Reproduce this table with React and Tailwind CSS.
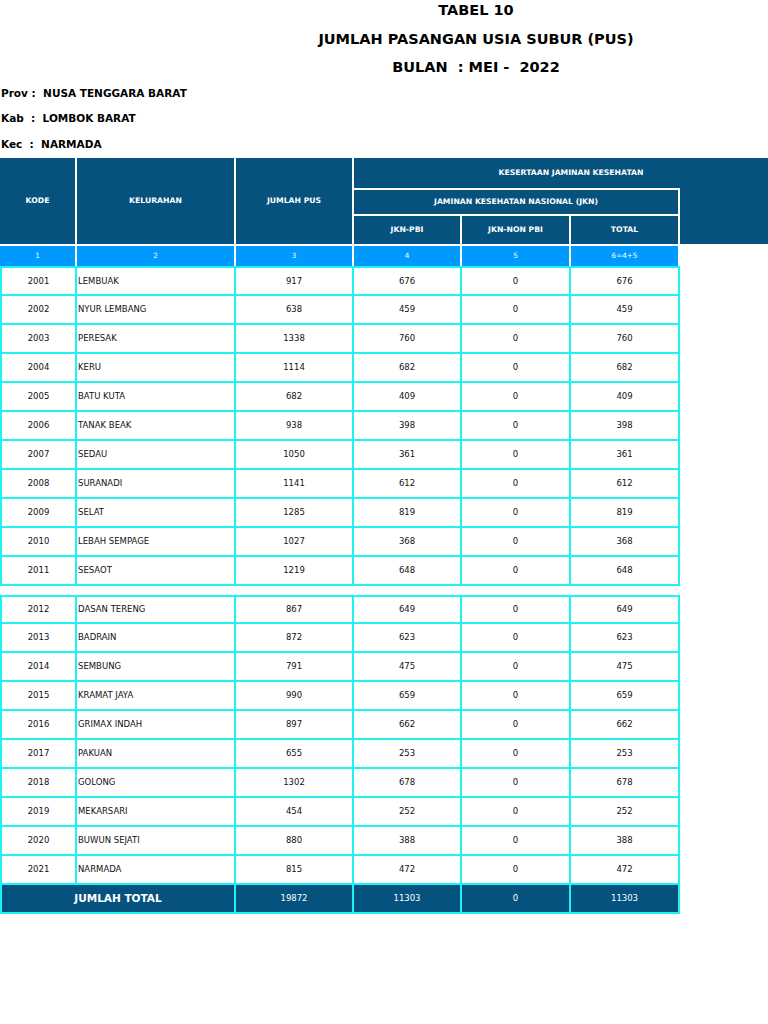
import React from 'react'

const groupA = [
  ['2001', 'LEMBUAK', '917', '676', '0', '676'],
  ['2002', 'NYUR LEMBANG', '638', '459', '0', '459'],
  ['2003', 'PERESAK', '1338', '760', '0', '760'],
  ['2004', 'KERU', '1114', '682', '0', '682'],
  ['2005', 'BATU KUTA', '682', '409', '0', '409'],
  ['2006', 'TANAK BEAK', '938', '398', '0', '398'],
  ['2007', 'SEDAU', '1050', '361', '0', '361'],
  ['2008', 'SURANADI', '1141', '612', '0', '612'],
  ['2009', 'SELAT', '1285', '819', '0', '819'],
  ['2010', 'LEBAH SEMPAGE', '1027', '368', '0', '368'],
  ['2011', 'SESAOT', '1219', '648', '0', '648'],
]

const groupB = [
  ['2012', 'DASAN TERENG', '867', '649', '0', '649'],
  ['2013', 'BADRAIN', '872', '623', '0', '623'],
  ['2014', 'SEMBUNG', '791', '475', '0', '475'],
  ['2015', 'KRAMAT JAYA', '990', '659', '0', '659'],
  ['2016', 'GRIMAX INDAH', '897', '662', '0', '662'],
  ['2017', 'PAKUAN', '655', '253', '0', '253'],
  ['2018', 'GOLONG', '1302', '678', '0', '678'],
  ['2019', 'MEKARSARI', '454', '252', '0', '252'],
  ['2020', 'BUWUN SEJATI', '880', '388', '0', '388'],
  ['2021', 'NARMADA', '815', '472', '0', '472'],
]

const cols = 'grid grid-cols-[77px_159px_118px_108px_109px_109px] w-[680px]'

function Row({ r, first, tall }) {
  return (
    <div
      className={
        cols +
        ' border-b-2 border-[#1ef2f2] ' +
        (tall ? 'h-[30px] ' : 'h-[29px] ') +
        (first ? 'border-t-2' : '')
      }
    >
      {r.map((v, i) => (
        <div
          key={i}
          className={
            'flex items-center border-r-2 border-[#1ef2f2] ' +
            (i === 0 ? 'border-l-2 justify-center ' : '') +
            (i === 1 ? 'pl-[1px]' : 'justify-center')
          }
        >
          {v}
        </div>
      ))}
    </div>
  )
}

export default function App() {
  return (
    <div className="w-[768px] h-[1024px] bg-white text-black font-['DejaVu_Sans',sans-serif] overflow-hidden">
      <div className="pl-[184px] text-center font-bold text-[14.5px]">
        <div className="h-[20px] mt-[1px] flex items-center justify-center">TABEL 10</div>
        <div className="h-[20px] mt-[9px] flex items-center justify-center">JUMLAH PASANGAN USIA SUBUR (PUS)</div>
        <div className="h-[20px] mt-[8px] flex items-center justify-center whitespace-pre">BULAN  : MEI -  2022</div>
      </div>
      <div className="font-bold text-[10.5px] whitespace-pre pl-[1px]">
        <div className="h-[20px] mt-[6px] flex items-center">Prov :  NUSA TENGGARA BARAT</div>
        <div className="h-[20px] mt-[5px] flex items-center">Kab  :  LOMBOK BARAT</div>
        <div className="h-[20px] mt-[6px] flex items-center">Kec  :  NARMADA</div>
      </div>

      <div className="mt-[3px]">
        {/* header */}
        <div className="flex w-[768px] h-[88px] bg-[#05527e] text-white font-bold text-[7.7px] border-b-2 border-white">
          <div className="w-[77px] border-r-2 border-white flex items-center justify-center">KODE</div>
          <div className="w-[159px] border-r-2 border-white flex items-center justify-center">KELURAHAN</div>
          <div className="w-[118px] border-r-2 border-white flex items-center justify-center">JUMLAH PUS</div>
          <div className="flex-1 flex flex-col">
            <div className="h-[30px] flex items-center justify-center pl-[20px]">KESERTAAN JAMINAN KESEHATAN</div>
            <div className="flex flex-1">
              <div className="w-[326px] flex flex-col border-t-2 border-r-2 border-white">
                <div className="h-[26px] border-b-2 border-white flex items-center justify-center">
                  JAMINAN KESEHATAN NASIONAL (JKN)
                </div>
                <div className="flex flex-1">
                  <div className="w-[108px] border-r-2 border-white flex items-center justify-center">JKN-PBI</div>
                  <div className="w-[109px] border-r-2 border-white flex items-center justify-center">JKN-NON PBI</div>
                  <div className="flex-1 flex items-center justify-center">TOTAL</div>
                </div>
              </div>
              <div className="flex-1" />
            </div>
          </div>
        </div>

        {/* column numbers */}
        <div className={cols + ' h-[20px] bg-[#0099ff] text-white text-[7.2px]'}>
          {['1', '2', '3', '4', '5', '6=4+5'].map((v, i) => (
            <div key={i} className="flex items-center justify-center border-r-2 border-white">
              {v}
            </div>
          ))}
        </div>

        <div className="text-[8.5px] text-[#111]">
          {groupA.map((r, i) => (
            <Row key={r[0]} r={r} first={i === 0} tall={i === 0} />
          ))}
          <div className="h-[9px]" />
          {groupB.map((r, i) => (
            <Row key={r[0]} r={r} first={i === 0} />
          ))}

          {/* total */}
          <div className={cols + ' h-[29px] bg-[#05527e] text-white border-b-2 border-[#1ef2f2]'}>
            <div className="col-span-2 flex items-center justify-center font-bold text-[10.5px] border-l-2 border-r-2 border-[#1ef2f2]">
              JUMLAH TOTAL
            </div>
            {['19872', '11303', '0', '11303'].map((v, i) => (
              <div key={i} className="flex items-center justify-center border-r-2 border-[#1ef2f2]">
                {v}
              </div>
            ))}
          </div>
        </div>
      </div>
    </div>
  )
}
